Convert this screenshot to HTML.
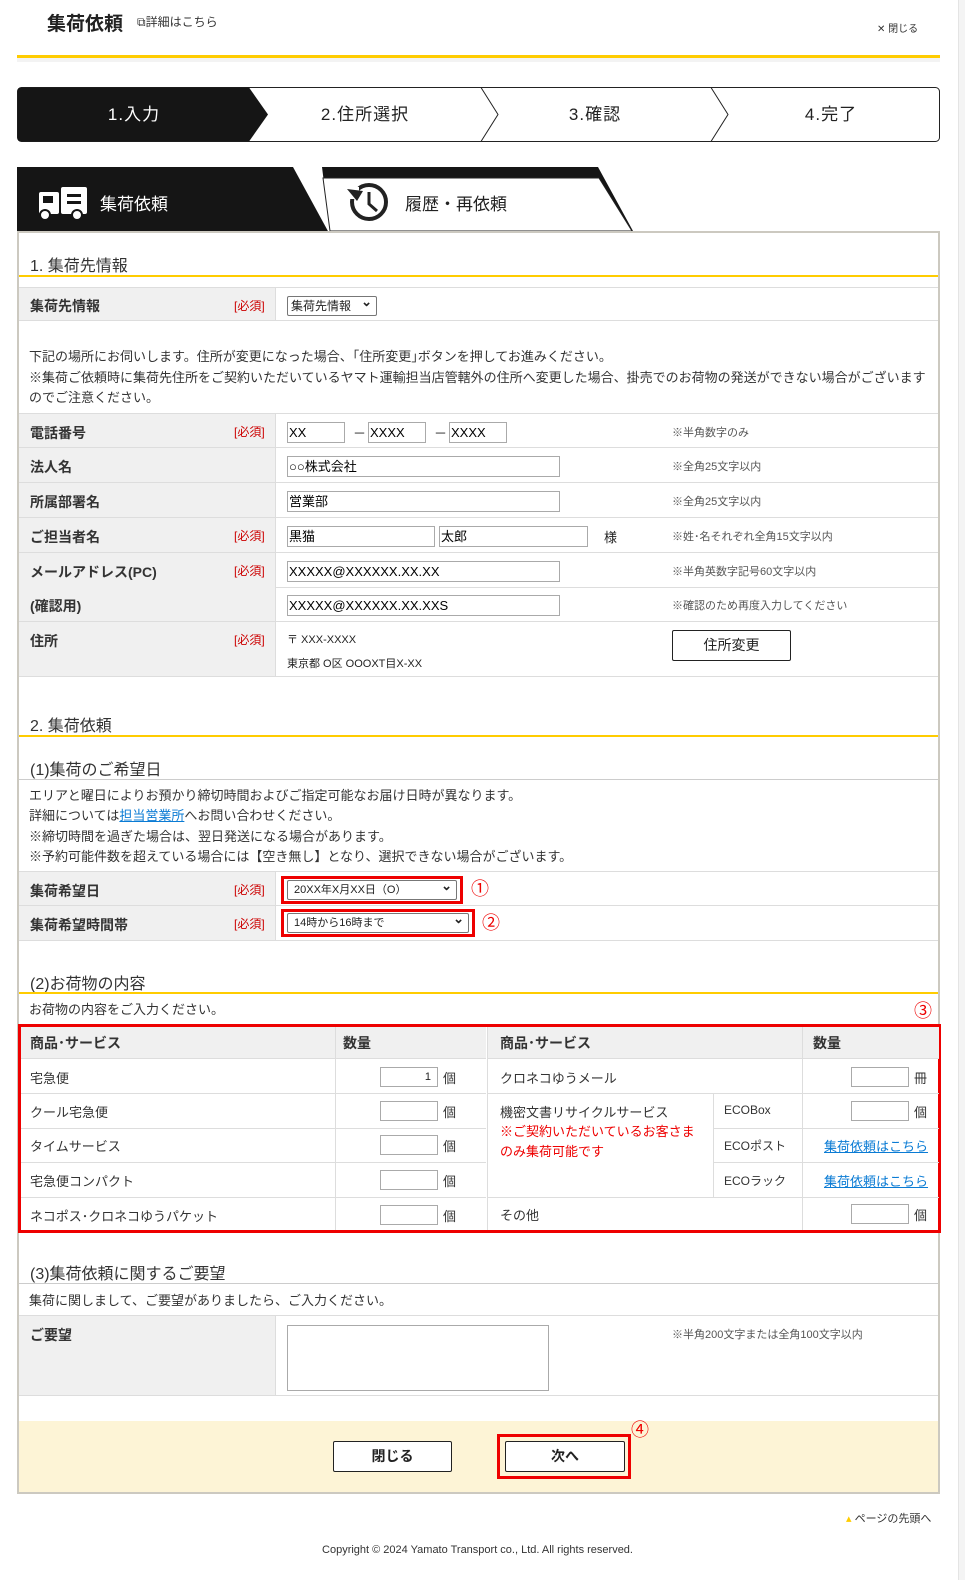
<!DOCTYPE html>
<html><head><meta charset="utf-8"><style>
*{margin:0;padding:0;box-sizing:border-box}
body{width:965px;height:1580px;position:relative;background:#fff;font-family:"Liberation Sans","Noto Sans CJK JP",sans-serif;color:#222;font-size:13px;overflow:hidden}
.a{position:absolute;white-space:nowrap}
.row{position:absolute;left:19px;width:919px;border-bottom:1px solid #ddd}
.lab{position:absolute;left:0;top:0;bottom:0;width:257px;background:#f0f0f0;border-right:1px solid #ddd}
.lab b{position:absolute;left:11px;font-size:14px;font-weight:bold;color:#333}
.req{position:absolute;left:215px;font-size:12px;color:#c00}
.in{position:absolute;height:21px;border:1px solid #aaa;background:#fff;font-size:13px;padding-left:1px;line-height:19px;color:#000}
.note{position:absolute;left:653px;font-size:11px;color:#555}
.h2{position:absolute;left:30px;font-size:16px;color:#333}
.yl{position:absolute;left:19px;width:919px;height:2px;background:#fc0}
.gl{position:absolute;left:19px;width:919px;height:1px;background:#ccc}
.sel{position:absolute;height:20px;border:1px solid #777;background:#fff;font-size:11px;line-height:18px;padding-left:6px;border-radius:2px}
.sel:after{content:"⌄";position:absolute;right:4px;top:-4px;font-size:13px;font-weight:bold}
.t{position:absolute;font-size:13px;color:#333}
.cell{position:absolute;border-bottom:1px solid #ddd}
.qi{position:absolute;width:58px;height:20px;border:1px solid #aaa;background:#fff;font-size:11px;text-align:right;padding-right:6px;line-height:18px}
.lnk{color:#0a7bd4;text-decoration:underline}
.red{color:#e00}
.circ{position:absolute;color:#e00;font-size:18px}
</style></head><body>
<div class="a" style="left:958px;top:0;width:7px;height:1580px;background:#f4f4f4;border-left:1px solid #e4e4e4"></div>
<div class="a" style="left:47px;top:9px;font-size:19px;font-weight:bold;color:#222">集荷依頼</div>
<div class="a" style="left:137px;top:13px;font-size:12px;color:#333">⧉詳細はこちら</div>
<div class="a" style="left:877px;top:20px;font-size:10px;color:#333">✕ 閉じる</div>
<div class="a" style="left:17px;top:55px;width:923px;height:3px;background:#fc0"></div>
<div class="a" style="left:17px;top:58px;width:923px;height:4px;background:#f3f3f3"></div>

<svg class="a" style="left:17px;top:87px" width="924" height="55">
<rect x="0.5" y="0.5" width="922" height="54" rx="4" fill="#fff" stroke="#222"/>
<path d="M4 0.5 H232 L251 27.5 L232 54.5 H4 Q0.5 54.5 0.5 51 V4 Q0.5 0.5 4 0.5Z" fill="#151515"/>
<path d="M464 0.5 L481 27.5 L464 54.5 M694 0.5 L711 27.5 L694 54.5" fill="none" stroke="#222"/>
<text x="117" y="33" font-size="17" fill="#fff" text-anchor="middle" font-family="Liberation Sans,Noto Sans CJK JP,sans-serif" letter-spacing="1">1.入力</text>
<text x="348" y="33" font-size="17" fill="#222" text-anchor="middle" font-family="Liberation Sans,Noto Sans CJK JP,sans-serif" letter-spacing="1">2.住所選択</text>
<text x="578" y="33" font-size="17" fill="#222" text-anchor="middle" font-family="Liberation Sans,Noto Sans CJK JP,sans-serif" letter-spacing="1">3.確認</text>
<text x="814" y="33" font-size="17" fill="#222" text-anchor="middle" font-family="Liberation Sans,Noto Sans CJK JP,sans-serif" letter-spacing="1">4.完了</text>
</svg>

<svg class="a" style="left:17px;top:167px" width="630" height="66">
<path d="M0 0 H276 L312 66 H0Z" fill="#151515"/>
<path d="M305 0 H581 L616 64 H313 Z" fill="#151515"/>
<path d="M306 11 H582 L615 64 H313 Z" fill="#fff" stroke="#222"/>
<g fill="#fff"><rect x="22" y="25" width="20" height="22" rx="2"/><rect x="44" y="20" width="26" height="27" rx="2"/><circle cx="28" cy="48" r="5" stroke="#151515" stroke-width="2"/><circle cx="60" cy="48" r="5" stroke="#151515" stroke-width="2"/></g>
<rect x="26" y="29" width="10" height="7" fill="#151515"/><rect x="50" y="27" width="14" height="3" fill="#151515"/><rect x="50" y="34" width="14" height="3" fill="#151515"/>
<text x="83" y="43" font-size="17" fill="#fff" font-family="Liberation Sans,Noto Sans CJK JP,sans-serif">集荷依頼</text>
<circle cx="352" cy="35" r="17" fill="none" stroke="#222" stroke-width="4"/>
<rect x="330" y="20" width="12" height="12" fill="#fff"/>
<path d="M330 22 L340 34 L346 24Z" fill="#222"/>
<path d="M352 25 V37 L360 44" fill="none" stroke="#222" stroke-width="3"/>
<text x="388" y="43" font-size="17" fill="#222" font-family="Liberation Sans,Noto Sans CJK JP,sans-serif">履歴・再依頼</text>
</svg>

<div class="a" style="left:17px;top:231px;width:923px;height:1263px;border:2px solid #ccc9c0"></div>

<div class="h2" style="top:252px">1. 集荷先情報</div>
<div class="yl" style="top:275px"></div>
<div class="row" style="top:287px;height:34px;border-top:1px solid #ddd"><div class="lab"><b style="top:8px">集荷先情報</b><span class="req" style="top:9px">[必須]</span></div><div class="sel" style="left:268px;top:8px;width:90px;font-size:12px;padding-left:3px">集荷先情報</div></div>
<div class="t" style="left:29px;top:347px;line-height:20.5px;width:900px;white-space:normal">下記の場所にお伺いします。住所が変更になった場合、｢住所変更｣ボタンを押してお進みください。<br>※集荷ご依頼時に集荷先住所をご契約いただいているヤマト運輸担当店管轄外の住所へ変更した場合、掛売でのお荷物の発送ができない場合がございますのでご注意ください。</div>

<div class="row" style="top:413px;height:35px;border-top:1px solid #ddd"><div class="lab"><b style="top:9px">電話番号</b><span class="req" style="top:9px">[必須]</span></div>
<div class="in" style="left:268px;top:8px;width:58px">XX</div><span class="a" style="left:334px;top:9px">－</span><div class="in" style="left:349px;top:8px;width:58px">XXXX</div><span class="a" style="left:415px;top:9px">－</span><div class="in" style="left:430px;top:8px;width:58px">XXXX</div><span class="note" style="top:10px">※半角数字のみ</span></div>
<div class="row" style="top:448px;height:35px"><div class="lab"><b style="top:9px">法人名</b></div><div class="in" style="left:268px;top:8px;width:273px">○○株式会社</div><span class="note" style="top:10px">※全角25文字以内</span></div>
<div class="row" style="top:483px;height:35px"><div class="lab"><b style="top:9px">所属部署名</b></div><div class="in" style="left:268px;top:8px;width:273px">営業部</div><span class="note" style="top:10px">※全角25文字以内</span></div>
<div class="row" style="top:518px;height:35px"><div class="lab"><b style="top:9px">ご担当者名</b><span class="req" style="top:9px">[必須]</span></div><div class="in" style="left:268px;top:8px;width:148px">黒猫</div><div class="in" style="left:420px;top:8px;width:149px">太郎</div><span class="a" style="left:585px;top:9px">様</span><span class="note" style="top:10px">※姓･名それぞれ全角15文字以内</span></div>
<div class="row" style="top:553px;height:69px"><div class="lab"><b style="top:9px">メールアドレス(PC)</b><span class="req" style="top:9px">[必須]</span><b style="top:43px">(確認用)</b></div>
<div class="in" style="left:268px;top:8px;width:273px">XXXXX@XXXXXX.XX.XX</div><span class="note" style="top:10px">※半角英数字記号60文字以内</span>
<div style="position:absolute;left:257px;right:0;top:34px;height:1px;background:#ddd"></div>
<div class="in" style="left:268px;top:42px;width:273px">XXXXX@XXXXXX.XX.XXS</div><span class="note" style="top:44px">※確認のため再度入力してください</span></div>
<div class="row" style="top:622px;height:55px"><div class="lab"><b style="top:9px">住所</b><span class="req" style="top:9px">[必須]</span></div>
<span class="a" style="left:268px;top:9px;font-size:11px">〒 XXX-XXXX</span><span class="a" style="left:268px;top:33px;font-size:11px">東京都 O区 OOOXT目X-XX</span>
<div class="a" style="left:653px;top:8px;width:119px;height:31px;border:1px solid #222;border-radius:2px;text-align:center;line-height:29px;font-size:14px">住所変更</div></div>

<div class="h2" style="top:712px">2. 集荷依頼</div>
<div class="yl" style="top:735px"></div>
<div class="h2" style="top:756px">(1)集荷のご希望日</div>
<div class="gl" style="top:779px"></div>
<div class="t" style="left:29px;top:786px;line-height:20.3px">エリアと曜日によりお預かり締切時間およびご指定可能なお届け日時が異なります。<br>詳細については<span class="lnk">担当営業所</span>へお問い合わせください。<br>※締切時間を過ぎた場合は、翌日発送になる場合があります。<br>※予約可能件数を超えている場合には【空き無し】となり、選択できない場合がございます。</div>
<div class="row" style="top:871px;height:35px;border-top:1px solid #ddd"><div class="lab"><b style="top:9px">集荷希望日</b><span class="req" style="top:9px">[必須]</span></div>
<div class="a" style="left:262px;top:4px;width:182px;height:28px;border:3px solid #e00"></div><div class="sel" style="left:268px;top:8px;width:170px">20XX年X月XX日（O）</div><span class="circ" style="left:452px;top:3px">①</span></div>
<div class="row" style="top:906px;height:35px"><div class="lab"><b style="top:9px">集荷希望時間帯</b><span class="req" style="top:9px">[必須]</span></div>
<div class="a" style="left:262px;top:3px;width:194px;height:28px;border:3px solid #e00"></div><div class="sel" style="left:268px;top:7px;width:182px">14時から16時まで</div><span class="circ" style="left:463px;top:3px">②</span></div>

<div class="h2" style="top:970px">(2)お荷物の内容</div>
<div class="yl" style="top:992px"></div>
<div class="t" style="left:29px;top:999px">お荷物の内容をご入力ください。</div>
<span class="circ" style="left:914px;top:997px">③</span>

<div class="a" style="left:18px;top:1024px;width:923px;height:209px;border:3px solid #e00"></div>
<div class="a" style="left:21px;top:1027px;width:465px;height:203px">
<div class="cell" style="left:0;top:0;width:465px;height:32px;background:#f0f0f0"></div>
<div class="a" style="left:314px;top:0;width:1px;height:203px;background:#ddd"></div>
<b class="a" style="left:9px;top:6px;font-size:14px;color:#333">商品･サービス</b><b class="a" style="left:322px;top:6px;font-size:14px;color:#333">数量</b>
<div class="cell" style="left:0;top:32px;width:465px;height:35px"></div><span class="t" style="left:9px;top:41px">宅急便</span><div class="qi" style="left:359px;top:40px">1</div><span class="t" style="left:422px;top:41px">個</span>
<div class="cell" style="left:0;top:67px;width:465px;height:35px"></div><span class="t" style="left:9px;top:75px">クール宅急便</span><div class="qi" style="left:359px;top:74px"></div><span class="t" style="left:422px;top:75px">個</span>
<div class="cell" style="left:0;top:102px;width:465px;height:34px"></div><span class="t" style="left:9px;top:109px">タイムサービス</span><div class="qi" style="left:359px;top:108px"></div><span class="t" style="left:422px;top:109px">個</span>
<div class="cell" style="left:0;top:136px;width:465px;height:35px"></div><span class="t" style="left:9px;top:144px">宅急便コンパクト</span><div class="qi" style="left:359px;top:143px"></div><span class="t" style="left:422px;top:144px">個</span>
<span class="t" style="left:9px;top:179px">ネコポス･クロネコゆうパケット</span><div class="qi" style="left:359px;top:178px"></div><span class="t" style="left:422px;top:179px">個</span>
</div>
<div class="a" style="left:487px;top:1027px;width:451px;height:203px;border-left:1px solid #ddd">
<div class="cell" style="left:0;top:0;width:451px;height:32px;background:#f0f0f0"></div>
<div class="a" style="left:314px;top:0;width:1px;height:203px;background:#ddd"></div>
<div class="a" style="left:225px;top:67px;width:1px;height:103px;background:#ddd"></div>
<b class="a" style="left:12px;top:6px;font-size:14px;color:#333">商品･サービス</b><b class="a" style="left:325px;top:6px;font-size:14px;color:#333">数量</b>
<div class="cell" style="left:0;top:32px;width:451px;height:35px"></div><span class="t" style="left:12px;top:41px">クロネコゆうメール</span><div class="qi" style="left:363px;top:40px"></div><span class="t" style="left:426px;top:41px">冊</span>
<div class="cell" style="left:225px;top:67px;width:226px;height:35px"></div><div class="cell" style="left:225px;top:102px;width:226px;height:34px"></div>
<div class="a" style="left:0;top:170px;width:451px;height:1px;background:#ddd"></div>
<span class="t" style="left:12px;top:75px">機密文書リサイクルサービス</span>
<span class="t red" style="left:12px;top:95px;line-height:20px">※ご契約いただいているお客さま<br>のみ集荷可能です</span>
<span class="t" style="left:236px;top:76px;font-size:12px">ECOBox</span><div class="qi" style="left:363px;top:74px"></div><span class="t" style="left:426px;top:75px">個</span>
<span class="t" style="left:236px;top:110px;font-size:12px">ECOポスト</span><span class="t lnk" style="left:336px;top:109px">集荷依頼はこちら</span>
<span class="t" style="left:236px;top:145px;font-size:12px">ECOラック</span><span class="t lnk" style="left:336px;top:144px">集荷依頼はこちら</span>
<span class="t" style="left:12px;top:178px">その他</span><div class="qi" style="left:363px;top:177px"></div><span class="t" style="left:426px;top:178px">個</span>
</div>

<div class="h2" style="top:1260px">(3)集荷依頼に関するご要望</div>
<div class="gl" style="top:1283px"></div>
<div class="t" style="left:29px;top:1290px">集荷に関しまして、ご要望がありましたら、ご入力ください。</div>
<div class="row" style="top:1315px;height:81px;border-top:1px solid #ddd"><div class="lab"><b style="top:9px">ご要望</b></div>
<div class="a" style="left:268px;top:9px;width:262px;height:66px;border:1px solid #aaa"></div><span class="note" style="top:10px">※半角200文字または全角100文字以内</span></div>

<div class="a" style="left:19px;top:1421px;width:919px;height:71px;background:#fdf4d6"></div>
<div class="a" style="left:333px;top:1441px;width:119px;height:31px;border:1px solid #222;background:#fff;border-radius:2px;text-align:center;line-height:29px;font-size:14px;font-weight:bold">閉じる</div>
<div class="a" style="left:497px;top:1434px;width:134px;height:45px;border:3px solid #e00"></div>
<div class="a" style="left:505px;top:1441px;width:120px;height:31px;border:1px solid #222;background:#fff;border-radius:2px;text-align:center;line-height:29px;font-size:14px;font-weight:bold">次へ</div>
<span class="circ" style="left:631px;top:1416px">④</span>

<div class="a" style="left:846px;top:1510px;font-size:11px;color:#333"><span style="color:#fc0">▴</span> ページの先頭へ</div>
<div class="a" style="left:0;width:955px;top:1544px;text-align:center;font-size:11px;color:#333">Copyright © 2024 Yamato Transport co., Ltd. All rights reserved.</div>
</body></html>
